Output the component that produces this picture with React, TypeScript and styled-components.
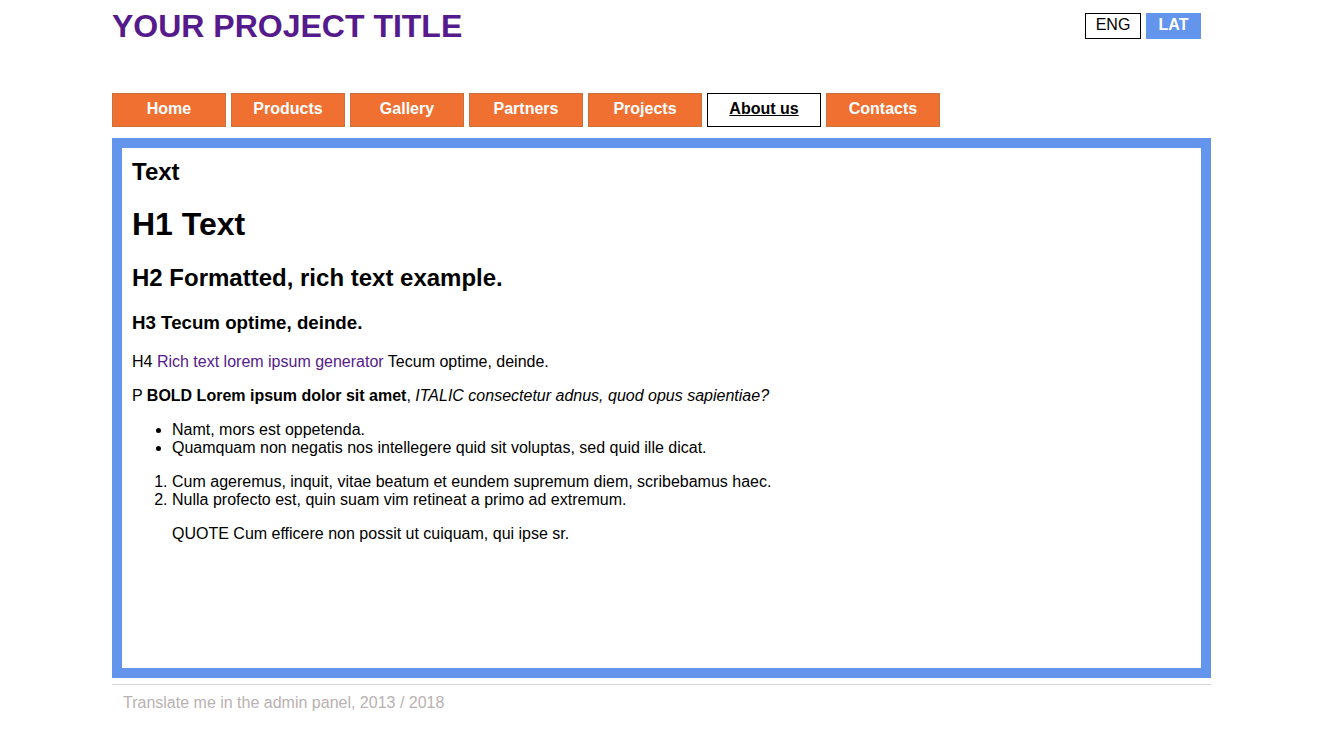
import React from "react";
import styled, { createGlobalStyle } from "styled-components";

const Global = createGlobalStyle`
  html, body { margin: 0; padding: 0; background: #fff; }
  body { font-family: "Liberation Sans", Arial, sans-serif; font-size: 16px; color: #000; }
`;

const Page = styled.div`
  width: 1100px;
  margin: 0 auto;
  padding-top: 8px;
`;

const Header = styled.header`
  display: flex;
  justify-content: space-between;
  align-items: flex-start;
  height: 85px;
`;

const Title = styled.a`
  font-size: 32px;
  font-weight: bold;
  color: #551a8b;
  text-decoration: none;
  line-height: 36.8px;
`;

const Langs = styled.div`
  display: flex;
  gap: 5px;
  margin-top: 5px;
  margin-right: 11px;
`;

const Lang = styled.a<{ $active?: boolean }>`
  display: flex;
  align-items: center;
  justify-content: center;
  box-sizing: border-box;
  width: ${(p) => (p.$active ? "55px" : "56px")};
  height: 26px;
  font-size: 16px;
  text-decoration: none;
  border: 1px solid ${(p) => (p.$active ? "#6495ed" : "#000")};
  background: ${(p) => (p.$active ? "#6495ed" : "#fff")};
  color: ${(p) => (p.$active ? "#fff" : "#000")};
  font-weight: ${(p) => (p.$active ? "bold" : "normal")};
  padding-bottom: 2px;
`;

const Nav = styled.nav`
  display: flex;
  gap: 5px;
  margin-bottom: 11px;
`;

const NavItem = styled.a<{ $active?: boolean }>`
  display: flex;
  align-items: center;
  justify-content: center;
  box-sizing: border-box;
  width: 114px;
  height: 34px;
  font-size: 16px;
  font-weight: bold;
  padding-bottom: 3px;
  border: 1px solid ${(p) => (p.$active ? "#000" : "#c9703f")};
  background: ${(p) => (p.$active ? "#fff" : "#f07032")};
  color: ${(p) => (p.$active ? "#000" : "#fff")};
  text-decoration: ${(p) => (p.$active ? "underline" : "none")};
`;

const Content = styled.main`
  border: 10px solid #6495ed;
  padding: 10px;
  min-height: 500px;
  margin-right: 1px;
`;

const PageTitle = styled.h2`
  font-size: 24px;
  font-weight: bold;
  margin: 0 0 20px;
`;

const H1 = styled.h1`
  font-size: 32px;
  font-weight: bold;
  margin: 20px 0 21px;
`;

const H2 = styled.h2`
  font-size: 24px;
  font-weight: bold;
  margin: 20px 0;
`;

const H3 = styled.h3`
  font-size: 18.72px;
  font-weight: bold;
  margin: 18.72px 0;
`;

const P = styled.p`
  margin: 16px 0;
  line-height: 18px;
`;

const Link = styled.a`
  color: #551a8b;
  text-decoration: none;
`;

const UL = styled.ul`
  margin: 16px 0;
  padding-left: 40px;
  line-height: 18px;
`;

const OL = styled.ol`
  margin: 16px 0;
  padding-left: 40px;
  line-height: 18px;
`;

const Quote = styled.blockquote`
  margin: 16px 40px;
  line-height: 18px;
`;

const Footer = styled.footer`
  border-top: 1px solid #d3d3d3;
  margin-top: 6px;
  margin-right: 1px;
  padding: 9px 11px;
  color: #b9b1b1;
  font-size: 16px;
  line-height: 18.4px;
`;

const navItems = ["Home", "Products", "Gallery", "Partners", "Projects", "About us", "Contacts"];

export default function App() {
  return (
    <>
      <Global />
      <Page>
        <Header>
          <Title href="#">YOUR PROJECT TITLE</Title>
          <Langs>
            <Lang href="#">ENG</Lang>
            <Lang href="#" $active>LAT</Lang>
          </Langs>
        </Header>
        <Nav>
          {navItems.map((n) => (
            <NavItem key={n} href="#" $active={n === "About us"}>
              {n}
            </NavItem>
          ))}
        </Nav>
        <Content>
          <PageTitle>Text</PageTitle>
          <H1>H1 Text</H1>
          <H2>H2 Formatted, rich text example.</H2>
          <H3>H3 Tecum optime, deinde.</H3>
          <P>
            H4 <Link href="#">Rich text lorem ipsum generator</Link> Tecum optime, deinde.
          </P>
          <P>
            P <b>BOLD Lorem ipsum dolor sit amet</b>, <i>ITALIC consectetur adnus, quod opus sapientiae?</i>
          </P>
          <UL>
            <li>Namt, mors est oppetenda.</li>
            <li>Quamquam non negatis nos intellegere quid sit voluptas, sed quid ille dicat.</li>
          </UL>
          <OL>
            <li>Cum ageremus, inquit, vitae beatum et eundem supremum diem, scribebamus haec.</li>
            <li>Nulla profecto est, quin suam vim retineat a primo ad extremum.</li>
          </OL>
          <Quote>QUOTE Cum efficere non possit ut cuiquam, qui ipse sr.</Quote>
        </Content>
        <Footer>Translate me in the admin panel, 2013 / 2018</Footer>
      </Page>
    </>
  );
}
